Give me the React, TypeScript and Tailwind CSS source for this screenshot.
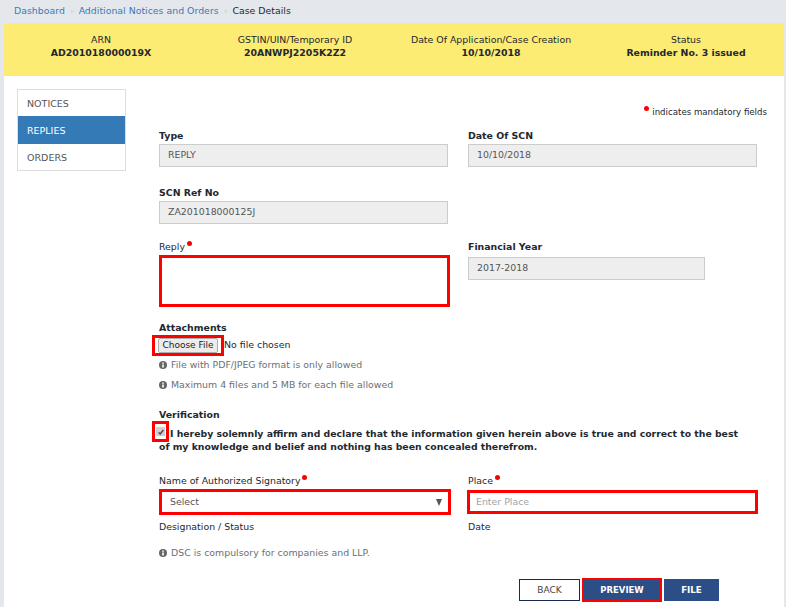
const font = "font-['DejaVu_Sans',sans-serif]";

function Dot() {
  return <span className="ml-[2px] inline-block h-[5px] w-[5px] -translate-y-[4px] rounded-full bg-[#ff0000] align-middle" />;
}

function Label({ children, bold }: { children: React.ReactNode; bold?: boolean }) {
  return <div className={`h-[16px] text-[9.4px] leading-[16px] text-[#23282f] ${bold ? "font-bold" : ""}`}>{children}</div>;
}

function ReadOnly({ value, width = "w-full" }: { value: string; width?: string }) {
  return (
    <div className={`flex h-[23px] items-center border border-[#cccccc] bg-[#eeeeee] pl-[8px] text-[9.4px] text-[#555555] ${width}`}>
      {value}
    </div>
  );
}

function InfoIcon() {
  return (
    <svg viewBox="0 0 16 16" className="mr-[4px] inline-block h-[8px] w-[8px] -translate-y-[1px]">
      <circle cx="8" cy="8" r="8" fill="#666666" />
      <rect x="6.4" y="7" width="3.2" height="6" fill="#ffffff" />
      <rect x="6.4" y="3" width="3.2" height="2.6" fill="#ffffff" />
    </svg>
  );
}

function Help({ children, className = "" }: { children: React.ReactNode; className?: string }) {
  return <div className={`text-[9.4px] leading-[14px] text-[#6b6f75] ${className}`}><InfoIcon />{children}</div>;
}

function HeadCell({ label, value }: { label: string; value: string }) {
  return (
    <div className="text-center text-[9.4px] leading-[13px] text-[#23282f]">
      <div>{label}</div>
      <div className="font-bold">{value}</div>
    </div>
  );
}

export default function App() {
  return (
    <div className={`${font} h-[607px] w-[786px] overflow-hidden bg-[#e4e8ec]`}>
      <div className="flex h-[23px] items-center gap-[5px] pl-[14px] text-[9.4px]">
        <span className="text-[#3b7ab5]">Dashboard</span>
        <span className="text-[#c5cad0]">›</span>
        <span className="text-[#3b7ab5]">Additional Notices and Orders</span>
        <span className="text-[#c5cad0]">›</span>
        <span className="text-[#23282f]">Case Details</span>
      </div>

      <div className="ml-[4px] mr-[2px] bg-white">
        <div className="grid h-[53px] grid-cols-[194px_194px_198px_192px] bg-[#fdec73] pt-[10px]">
          <HeadCell label="ARN" value="AD201018000019X" />
          <HeadCell label="GSTIN/UIN/Temporary ID" value="20ANWPJ2205K2Z2" />
          <HeadCell label="Date Of Application/Case Creation" value="10/10/2018" />
          <HeadCell label="Status" value="Reminder No. 3 issued" />
        </div>

        <div className="flex h-[531px]">
          <div className="ml-[13px] mt-[13px] h-[82px] w-[109px] border border-[#dddddd] text-[9.5px]">
            <div className="flex h-[26px] items-center pl-[9px] pt-[2px] text-[#555555]">NOTICES</div>
            <div className="flex h-[28px] items-center bg-[#337ab7] pl-[9px] pt-[2px] text-white">REPLIES</div>
            <div className="flex h-[26px] items-center pl-[9px] pt-[2px] text-[#555555]">ORDERS</div>
          </div>

          <div className="ml-[33px] w-[608px]">
            <div className="mt-[29px] flex h-[14px] items-center justify-end text-[8.65px] text-[#23282f]">
              <Dot />
              <span className="ml-[3px]">indicates mandatory fields</span>
            </div>

            <div className="mt-[9px] grid w-[598px] grid-cols-[289px_289px] gap-x-[20px]">
              <div>
                <Label bold>Type</Label>
                <ReadOnly value="REPLY" />
              </div>
              <div>
                <Label bold>Date Of SCN</Label>
                <ReadOnly value="10/10/2018" />
              </div>

              <div className="mt-[18px]">
                <Label bold>SCN Ref No</Label>
                <ReadOnly value="ZA201018000125J" />
              </div>
              <div />

              <div className="mt-[15px]">
                <Label><span>Reply</span><Dot /></Label>
                <div className="h-[52px] w-[291px] border-[3px] border-[#ff0000] bg-white" />
              </div>
              <div className="mt-[15px]">
                <Label bold>Financial Year</Label>
                <div className="pt-[2px]"><ReadOnly value="2017-2018" width="w-[237px]" /></div>
              </div>
            </div>

            <div className="mt-[13px]">
              <Label bold>Attachments</Label>
              <div className="-ml-[7px] -mt-[1px] flex items-center">
                <div className="flex h-[21px] w-[72px] items-center justify-center border-[3px] border-[#ff0000] bg-white">
                  <div className="flex h-[15px] w-[60px] items-center justify-center rounded-[2px] border border-[#adadad] bg-[#ececec] text-[9px] text-[#222222]">Choose File</div>
                </div>
                <span className="text-[9.4px] text-[#23282f]">No file chosen</span>
              </div>
              <Help className="mt-[2px]">File with PDF/JPEG format is only allowed</Help>
              <Help className="mt-[6px]">Maximum 4 files and 5 MB for each file allowed</Help>
            </div>

            <div className="mt-[15px]">
              <Label bold>Verification</Label>
              <div className="-ml-[7px] -mt-[2px] flex">
                <div className="flex h-[21px] w-[17px] shrink-0 items-center justify-center border-[3px] border-[#ff0000] bg-white">
                  <div className="flex h-[9px] w-[9px] items-center justify-center bg-[#cfcfcf]">
                    <svg viewBox="0 0 10 10" className="h-[8px] w-[8px]"><path d="M2 5.5 L4 7.5 L8 2.5" fill="none" stroke="#444444" strokeWidth="1.6" /></svg>
                  </div>
                </div>
              </div>
              <div className="-mt-[15px] w-[585px] text-[9.3px] font-bold leading-[13px] text-[#23282f]">
                <span className="ml-[11px]">I hereby solemnly affirm and declare that the information given herein above is true and correct to the best of my knowledge and belief and nothing has been concealed therefrom.</span>
              </div>
            </div>

            <div className="mt-[20px] grid w-[599px] grid-cols-[292px_291px] gap-x-[16px]">
              <div>
                <Label><span>Name of Authorized Signatory</span><Dot /></Label>
                <div className="flex h-[26px] items-center justify-between border-[3px] border-[#ff0000] bg-white pl-[8px] pr-[6px] text-[9.4px] text-[#555555]">
                  <span>Select</span>
                  <span className="h-0 w-0 border-x-[3.5px] border-t-[7px] border-x-transparent border-t-[#555555]" />
                </div>
                <div className="mt-[4px] text-[9.4px] leading-[16px] text-[#23282f]">Designation / Status</div>
              </div>
              <div className="pl-[1px]">
                <Label><span>Place</span><Dot /></Label>
                <div className="-ml-[1px] mt-[1px] flex h-[24px] items-center border-[3px] border-[#ff0000] bg-white pl-[6px] text-[9.4px] text-[#a0a4aa]">Enter Place</div>
                <div className="mt-[5px] text-[9.4px] leading-[16px] text-[#23282f]">Date</div>
              </div>
            </div>

            <Help className="mt-[11px]">DSC is compulsory for companies and LLP.</Help>

            <div className="mt-[18px] flex items-center pl-[360px]">
              <div className="flex h-[22px] w-[61px] items-center justify-center border border-[#1b2a4a] bg-white pt-[1px] text-[9px] text-[#444444]">BACK</div>
              <div className="ml-[2px] flex h-[24px] w-[80px] items-center justify-center border-[2px] border-[#ff0000] bg-[#2c4e86] pt-[1px] text-[8.5px] font-bold text-white">PREVIEW</div>
              <div className="ml-[2px] flex h-[22px] w-[55px] items-center justify-center bg-[#2c4e86] pt-[1px] text-[8.7px] font-bold text-white">FILE</div>
            </div>
          </div>
        </div>
      </div>
    </div>
  );
}
